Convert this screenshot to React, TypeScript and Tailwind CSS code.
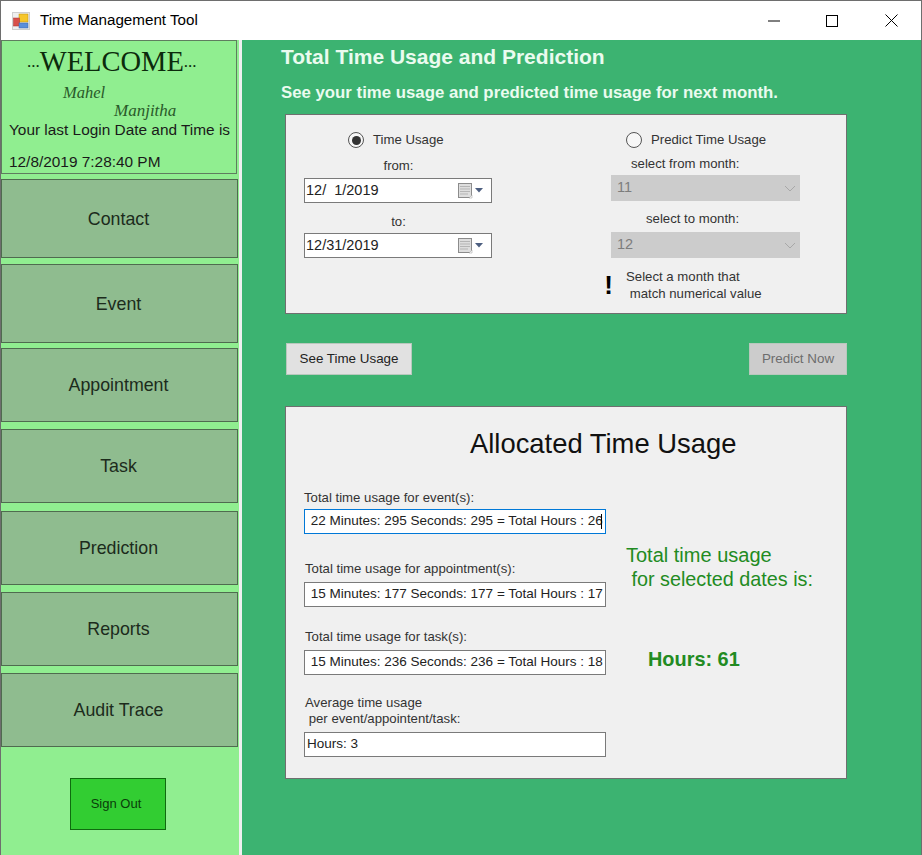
import React from "react";

const navItems = [
  { label: "Contact", cls: "h-[79px] mb-[6px]" },
  { label: "Event", cls: "h-[79px] mb-[5px]" },
  { label: "Appointment", cls: "h-[74px] mb-[7px]" },
  { label: "Task", cls: "h-[74px] mb-[8px]" },
  { label: "Prediction", cls: "h-[74px] mb-[7px]" },
  { label: "Reports", cls: "h-[74px] mb-[7px]" },
  { label: "Audit Trace", cls: "h-[74px] mb-[31px]" },
];

const CalendarIcon = () => (
  <svg width="26" height="16" viewBox="0 0 26 16" className="shrink-0">
    <rect x="0.5" y="0.5" width="13" height="14" fill="#dedede" stroke="#8c8c8c" />
    <path d="M2 3.5h10M2 6h10M2 8.5h10M2 11h8" stroke="#b5b5b5" />
    <path d="M11 15l3-3v3z" fill="#fff" stroke="#9a9a9a" strokeWidth="0.5" />
    <path d="M17 5h8l-4 4.5z" fill="#4d5f80" />
  </svg>
);

const DatePicker = ({ value }: { value: string }) => (
  <div className="w-[188px] h-[25px] border border-[#7a7a7a] bg-white flex items-center justify-between pl-[1px] pr-[7px] text-[14.5px] text-[#222]">
    <span className="whitespace-pre">{value}</span>
    <CalendarIcon />
  </div>
);

const DisabledSelect = ({ value }: { value: string }) => (
  <div className="w-[189px] h-[26px] bg-[#cccccc] flex items-center justify-between pl-[6px] pr-[3px] text-[14.5px] text-[#7d7d7d]">
    <span>{value}</span>
    <svg width="12" height="7" viewBox="0 0 12 7" className="mr-[1px]">
      <path d="M1 1l5 5 5-5" fill="none" stroke="#a8a8a8" />
    </svg>
  </div>
);

const Radio = ({ checked }: { checked?: boolean }) => (
  <span className="w-[16px] h-[16px] rounded-full border-[1.5px] border-[#555] bg-[#f7f7f7] flex items-center justify-center">
    {checked ? <span className="w-[9px] h-[9px] rounded-full bg-[#333]" /> : null}
  </span>
);

const UsageBox = ({ value, focused }: { value: string; focused?: boolean }) => (
  <div
    className={`relative w-[302px] h-[25px] bg-white border flex items-center overflow-hidden text-[13.5px] text-[#222] whitespace-nowrap pl-[2px] ${
      focused ? "border-[#0078d7]" : "border-[#7a7a7a]"
    }`}
  >
    <span className="whitespace-pre">{value}</span>
    {focused ? <span className="absolute right-[3px] top-[4px] w-px h-[15px] bg-black" /> : null}
  </div>
);

export default function App() {
  return (
    <div className="w-[922px] h-[855px] bg-white flex flex-col border-t border-l border-r border-[#6e6e6e] font-['Liberation_Sans',sans-serif] text-[#1a1a1a] overflow-hidden">
      <div className="h-[39px] shrink-0 flex items-center bg-white">
        <svg width="18" height="18" viewBox="0 0 18 18" className="ml-[11px]">
          <rect x="0.5" y="0.5" width="17" height="17" fill="#efefef" stroke="#cfcfcf" />
          <rect x="7" y="2" width="9" height="8" fill="#f6c62a" stroke="#b98d10" strokeWidth="0.5" />
          <rect x="1.5" y="6" width="6" height="8" fill="#d8504a" stroke="#a33" strokeWidth="0.5" />
          <rect x="7" y="11" width="9" height="5" fill="#5b8fdc" stroke="#3a66a8" strokeWidth="0.5" />
        </svg>
        <span className="ml-[10px] text-[15.2px] text-black">Time Management Tool</span>
        <div className="ml-auto flex items-center">
          <svg width="12" height="2" viewBox="0 0 12 2" className="mr-[46px]">
            <path d="M0 1h12" stroke="#000" />
          </svg>
          <svg width="12" height="12" viewBox="0 0 12 12" className="mr-[47px]">
            <rect x="0.5" y="0.5" width="11" height="11" fill="none" stroke="#000" />
          </svg>
          <svg width="13" height="13" viewBox="0 0 13 13" className="mr-[23px]">
            <path d="M0.5 0.5l12 12M12.5 0.5l-12 12" stroke="#000" />
          </svg>
        </div>
      </div>

      <div className="flex flex-1 min-h-0">
        <aside className="w-[241px] shrink-0 bg-[#90ee90] border-r-[3px] border-[#f0f0f0]">
          <div className="w-[236px] h-[134px] border border-[#5f7d5f] mb-[5px] flex flex-col">
            <div className="mt-[3px] h-[36px] flex items-center pl-[25px] font-['Liberation_Serif',serif] text-[#0c2a0c] whitespace-nowrap">
              <span className="text-[17px]">...</span>
              <span className="text-[28.5px]">WELCOME</span>
              <span className="text-[17px]">...</span>
            </div>
            <div className="mt-[4px] pl-[61px] h-[17px] font-['Liberation_Serif',serif] italic text-[16.5px] leading-[17px] text-[#2a5a2a]">
              Mahel
            </div>
            <div className="mt-[1px] pl-[112px] h-[17px] font-['Liberation_Serif',serif] italic text-[17px] leading-[17px] text-[#2a5a2a]">
              Manjitha
            </div>
            <div className="mt-[2px] pl-[7px] text-[15.4px] leading-[18px] whitespace-nowrap">Your last Login Date and Time is</div>
            <div className="mt-[14px] pl-[7px] text-[15.4px] leading-[18px]">12/8/2019 7:28:40 PM</div>
          </div>
          {navItems.map((item) => (
            <div
              key={item.label}
              className={`w-[237px] ${item.cls} bg-[#8fbc8f] border border-[#4f6b4f] flex items-center justify-center pr-[2px] pt-[1px] text-[17.8px] text-[#1c2b1c]`}
            >
              {item.label}
            </div>
          ))}
          <div className="ml-[69px] w-[96px] h-[52px] bg-[#32cd32] border border-[#0f6b0f] flex items-center justify-center pr-[4px] text-[13px] text-[#0a3d0a]">
            Sign Out
          </div>
        </aside>

        <main className="flex-1 bg-[#3cb371] pl-[39px] pr-[74px] pt-[5px]">
          <h1 className="h-[24px] text-[21px] leading-[24px] font-bold text-[#eafbef] whitespace-nowrap">
            Total Time Usage and Prediction
          </h1>
          <p className="mt-[15px] h-[18px] text-[16.8px] leading-[18px] font-bold text-[#eafbef] whitespace-nowrap">
            See your time usage and predicted time usage for next month.
          </p>

          <section className="ml-[4px] mt-[12px] w-[562px] h-[200px] bg-[#f0f0f0] border border-[#6f6f6f] flex pt-[15px] text-[13.2px] text-[#333]">
            <div className="w-[325px] pl-[18px]">
              <div className="h-[20px] flex items-center pl-[44px] gap-[9px]">
                <Radio checked />
                <span>Time Usage</span>
              </div>
              <div className="w-[189px] h-[28px] pt-[6px] text-center">from:</div>
              <DatePicker value="12/  1/2019" />
              <div className="w-[189px] h-[30px] pt-[9px] leading-[20px] text-center">to:</div>
              <DatePicker value="12/31/2019" />
            </div>
            <div className="w-[200px]">
              <div className="h-[20px] flex items-center pl-[15px] gap-[9px]">
                <Radio />
                <span>Predict Time Usage</span>
              </div>
              <div className="h-[25px] pl-[20px] pt-[4px]">select from month:</div>
              <DisabledSelect value="11" />
              <div className="h-[31px] pl-[35px] pt-[8px]">select to month:</div>
              <DisabledSelect value="12" />
              <div className="mt-[10px] flex">
                <span className="-ml-[10px] w-[15px] font-bold text-[26px] leading-[32px] text-black mt-[1px] text-center">!</span>
                <div className="ml-[10px] leading-[17px] whitespace-pre">
                  <div>Select a month that</div>
                  <div> match numerical value</div>
                </div>
              </div>
            </div>
          </section>

          <div className="ml-[5px] mt-[29px] w-[561px] h-[32px] flex justify-between text-[13.4px]">
            <div className="w-[126px] bg-[#e1e1e1] border border-[#b8c8bd] flex items-center justify-center text-[#222]">
              See Time Usage
            </div>
            <div className="w-[98px] bg-[#cccccc] border border-[#b8c8bd] flex items-center justify-center text-[#6d6d6d]">
              Predict Now
            </div>
          </div>

          <section className="ml-[4px] mt-[31px] w-[562px] h-[373px] bg-[#f0f0f0] border border-[#6f6f6f] flex text-[13.2px] text-[#333] pl-[18px]">
            <div className="w-[302px] relative">
              <div className="absolute left-[166px] top-[20px] text-[27.4px] leading-[34px] text-[#111] whitespace-nowrap">
                Allocated Time Usage
              </div>
              <div className="mt-[82px] h-[20px] leading-[18px]">Total time usage for event(s):</div>
              <UsageBox focused value=" 22 Minutes: 295 Seconds: 295 = Total Hours : 26" />
              <div className="mt-[25px] h-[23px] pl-[1px] leading-[20px]">Total time usage for appointment(s):</div>
              <UsageBox value=" 15 Minutes: 177 Seconds: 177 = Total Hours : 17" />
              <div className="mt-[20px] h-[23px] leading-[20px] pl-[1px]">Total time usage for task(s):</div>
              <UsageBox value=" 15 Minutes: 236 Seconds: 236 = Total Hours : 18" />
              <div className="mt-[20px] h-[37px] leading-[16px] whitespace-pre pl-[1px]">
                <div>Average time usage</div>
                <div> per event/appointent/task:</div>
              </div>
              <UsageBox value="Hours: 3" />
            </div>
            <div className="ml-[20px] pt-[136px] text-[#228b22] whitespace-pre">
              <div className="text-[20px] leading-[24px]">Total time usage</div>
              <div className="text-[19.8px] leading-[24px]"> for selected dates is:</div>
              <div className="mt-[56px] ml-[22px] text-[19.9px] leading-[24px] font-bold">Hours: 61</div>
            </div>
          </section>
        </main>
      </div>
    </div>
  );
}
